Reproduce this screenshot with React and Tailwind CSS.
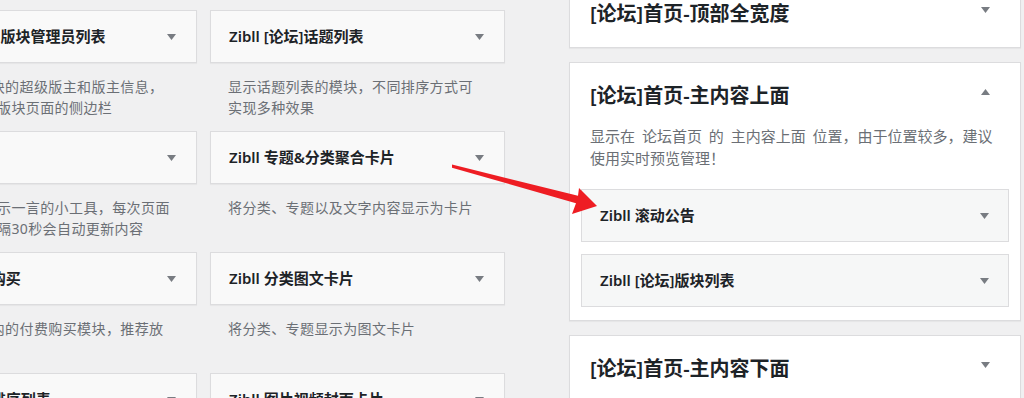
import React from "react";

const font = "font-['Noto_Sans','Noto_Sans_CJK_SC',sans-serif]";

const leftWidgets = [
  {
    title: "Zibll [论坛]版块管理员列表",
    desc: ["显示本版\u00a0\u00a0块的超级版主和版主信息，", "推荐放置在版块页面的侧边栏"],
  },
  {
    title: "Zibll 一言",
    desc: ["一个用于显示一言的小工具，每次页面", "刷新或者每隔30秒会自动更新内容"],
  },
  {
    title: "Zibll 付费购买",
    desc: ["用于\u00a0\u00a0文章内的付费购买模块，推荐放"],
  },
  { title: "Zibll 文章排序列表", desc: [] },
];

const midWidgets = [
  {
    title: "Zibll [论坛]话题列表",
    desc: ["显示话题列表的模块，不同排序方式可", "实现多种效果"],
  },
  {
    title: "Zibll 专题&分类聚合卡片",
    desc: ["将分类、专题以及文字内容显示为卡片"],
  },
  {
    title: "Zibll 分类图文卡片",
    desc: ["将分类、专题显示为图文卡片"],
  },
  { title: "Zibll 图片视频封面卡片", desc: [] },
];

const Caret = ({ up = false }) => (
  <svg width="9" height="6" viewBox="0 0 9 6" className="shrink-0">
    {up ? (
      <polygon points="0,6 9,6 4.5,0" fill="#787c82" />
    ) : (
      <polygon points="0,0 9,0 4.5,6" fill="#787c82" />
    )}
  </svg>
);

const WidgetColumn = ({ items, width }) => (
  <div className={`flex flex-col shrink-0 ${width}`}>
    {items.map((w) => (
      <div key={w.title}>
        <div className="h-[53px] flex items-center justify-between pl-[18px] pr-[20px] bg-[#f9f9f9] border border-[#dcdcde] shadow-[0_1px_1px_rgba(0,0,0,0.04)]">
          <span className="text-[15px] font-semibold text-[#1d2327] whitespace-nowrap">{w.title}</span>
          <Caret />
        </div>
        <div className="h-[68px] pt-[13px] px-[18px] text-[14px] leading-[21px] tracking-[0.4px] text-[#6b6f75] whitespace-nowrap">
          {w.desc.map((line) => (
            <div key={line}>{line}</div>
          ))}
        </div>
      </div>
    ))}
  </div>
);

const InnerWidget = ({ title }) => (
  <div className="h-[53px] mx-[11px] flex items-center justify-between pl-[18px] pr-[19px] bg-[#f6f7f7] border border-[#dcdcde]">
    <span className="text-[15px] font-semibold text-[#1d2327]">{title}</span>
    <Caret />
  </div>
);

const SidebarBox = ({ title, open = false, children }) => (
  <div className="bg-white border border-[#dcdcde] shadow-[0_1px_1px_rgba(0,0,0,0.04)]">
    <div className="flex items-center justify-between pt-[19px] pb-[19px] pl-[20px] pr-[30px]">
      <span className="text-[20px] leading-[28px] font-semibold text-[#1d2327]">{title}</span>
      <div className="-mt-[8px]">
        <Caret up={open} />
      </div>
    </div>
    {open && children}
  </div>
);

export default function App() {
  return (
    <div className={`relative w-[1024px] h-[398px] overflow-hidden bg-[#f0f0f1] ${font}`}>
      <div className="flex">
        <div className="flex gap-[13px] ml-[-93px] pt-[10px] shrink-0">
          <WidgetColumn items={leftWidgets} width="w-[290px]" />
          <WidgetColumn items={midWidgets} width="w-[295px]" />
        </div>

        <div className="ml-[64px] w-[452px] shrink-0 mt-[-20px] flex flex-col gap-[14px]">
          <SidebarBox title="[论坛]首页-顶部全宽度" />
          <SidebarBox title="[论坛]首页-主内容上面" open>
            <div className="-mt-[4px] px-[20px] text-[15px] leading-[22px] text-[#6b6f75] [word-spacing:3px]">
              <div>显示在 论坛首页 的 主内容上面 位置，由于位置较多，建议</div>
              <div>使用实时预览管理！</div>
            </div>
            <div className="flex flex-col gap-[12px] pt-[20px] pb-[13px]">
              <InnerWidget title="Zibll 滚动公告" />
              <InnerWidget title="Zibll [论坛]版块列表" />
            </div>
          </SidebarBox>
          <SidebarBox title="[论坛]首页-主内容下面" />
        </div>
      </div>

      <svg
        className="absolute inset-0 pointer-events-none"
        width="1024"
        height="398"
        viewBox="0 0 1024 398"
      >
        <polygon
          points="452,164.6 578,195.8 579,188 597,206 572,214 576,203.2 452,167.8"
          fill="#ee1d23"
        />
      </svg>
    </div>
  );
}
